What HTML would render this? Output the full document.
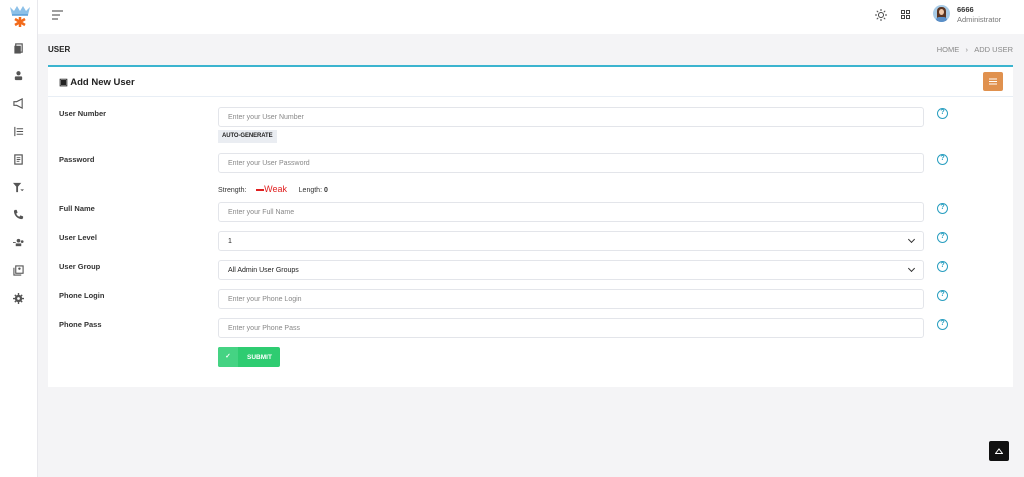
<!DOCTYPE html>
<html><head><meta charset="utf-8"><style>
*{box-sizing:border-box;margin:0;padding:0}
body{width:1024px;height:477px;background:#f4f4f6;font-family:"Liberation Sans",sans-serif;position:relative;overflow:hidden;color:#222}
.side{position:absolute;left:0;top:0;width:38px;height:477px;background:#fff;border-right:1px solid #e8e8ec}
.top{position:absolute;left:38px;top:0;right:0;height:34px;background:#fff}
.ic{position:absolute;left:13px;width:11px;height:11px}
.card{position:absolute;left:48px;top:65px;width:965px;height:322px;background:#fff;border-top:2px solid #3bb4cf}
.ch{height:30px;border-bottom:1px solid #e8eef5;position:relative}
.lbl{position:absolute;left:11px;font-size:7.5px;font-weight:bold;color:#333}
.inp{position:absolute;left:170px;width:706px;height:20px;border:1px solid #e3e5ea;border-radius:3px;font-size:7px;color:#888;padding:6px 9px}
.q{position:absolute;left:889px;width:11px;height:11px;border:1.5px solid #2a9fc0;border-radius:50%;font-size:7px;color:#2a9fc0;text-align:center;line-height:8px;font-weight:bold}
.chev{position:absolute;right:9px;top:5px;width:5px;height:5px;border-right:1.3px solid #333;border-bottom:1.3px solid #333;transform:rotate(45deg)}
</style></head><body>
<div class="side">
<svg style="position:absolute;left:8px;top:4px" width="24" height="24" viewBox="0 0 24 24"><path d="M2 3l4 4 3-5 3 5 3-5 3 5 4-4-2 8H4z" fill="#8cc0e8"/><path d="M4 11h16" stroke="#5a9fd8" stroke-width="1.5"/><path d="M12 13v10M7 15l10 6M17 15L7 21" stroke="#f26a1b" stroke-width="2.5"/></svg>
<svg class="ic" style="top:43px" viewBox="0 0 12 12"><rect x="3" y="1" width="7" height="9" fill="none" stroke="#555" stroke-width="1.3"/><rect x="1.5" y="3" width="7" height="8.5" fill="#555"/></svg>
<svg class="ic" style="top:70px" viewBox="0 0 12 12"><circle cx="6" cy="3.5" r="2.3" fill="#555"/><rect x="2" y="7" width="8" height="4" rx="1" fill="#555"/></svg>
<svg class="ic" style="top:98px" viewBox="0 0 12 12"><path d="M1 4h3l6-3v10l-6-3H1z" fill="none" stroke="#555" stroke-width="1.2"/></svg>
<svg class="ic" style="top:126px" viewBox="0 0 12 12"><path d="M2 1v10M4 3h7M4 6h7M4 9h7" stroke="#555" stroke-width="1.2"/></svg>
<svg class="ic" style="top:154px" viewBox="0 0 12 12"><rect x="2" y="1" width="8" height="10" fill="none" stroke="#555" stroke-width="1.3"/><path d="M4 4h4M4 6h4M4 8h3" stroke="#555"/></svg>
<svg class="ic" style="top:182px" viewBox="0 0 12 12"><path d="M0 1h9L5.5 5v6H3.5V5z" fill="#555"/><path d="M8 8h4l-2 2z" fill="#555"/></svg>
<svg class="ic" style="top:209px" viewBox="0 0 12 12"><path d="M2 1l2 0 1 3-1.5 1a6 6 0 0 0 3.5 3.5L8 7l3 1v2l-1 1C5 11 1 7 1 2z" fill="#555"/></svg>
<svg class="ic" style="top:237px" viewBox="0 0 12 12"><circle cx="6" cy="4" r="2" fill="#555"/><circle cx="10" cy="5" r="1.5" fill="#555"/><rect x="3" y="7" width="6" height="3" fill="#555"/><path d="M0 6h3" stroke="#555"/></svg>
<svg class="ic" style="top:265px" viewBox="0 0 12 12"><rect x="3" y="1" width="8" height="8" fill="none" stroke="#555" stroke-width="1.2"/><path d="M1 3v8h8" fill="none" stroke="#555" stroke-width="1.2"/><circle cx="7" cy="4" r="1.3" fill="#555"/></svg>
<svg class="ic" style="top:293px" viewBox="0 0 12 12"><path d="M6 0v12M0 6h12M2 2l8 8M10 2l-8 8" stroke="#555" stroke-width="1.5"/><circle cx="6" cy="6" r="4" fill="#555"/><circle cx="6" cy="6" r="1.5" fill="#fff"/></svg>
</div>
<div class="top">
<svg style="position:absolute;left:14px;top:10px" width="12" height="10" viewBox="0 0 12 10"><path d="M0 1h11M0 5h8M0 9h6" stroke="#666" stroke-width="1.2"/></svg>
<svg style="position:absolute;left:837px;top:9px" width="12" height="12" viewBox="0 0 12 12"><circle cx="6" cy="6" r="2.5" fill="none" stroke="#444"/><path d="M6 0v2M6 10v2M0 6h2M10 6h2M1.8 1.8l1.4 1.4M8.8 8.8l1.4 1.4M1.8 10.2l1.4-1.4M8.8 3.2l1.4-1.4" stroke="#444"/></svg>
<svg style="position:absolute;left:863px;top:10px" width="9" height="9" viewBox="0 0 9 9"><g fill="none" stroke="#444"><rect x=".5" y=".5" width="3" height="3"/><rect x="5.5" y=".5" width="3" height="3"/><rect x=".5" y="5.5" width="3" height="3"/><rect x="5.5" y="5.5" width="3" height="3"/></g></svg>
<div style="position:absolute;left:895px;top:5px;width:17px;height:17px;border-radius:50%;background:#a8cbe6;overflow:hidden"><div style="position:absolute;left:4px;top:2px;width:9px;height:14px;border-radius:4px 4px 0 0;background:#5a3422"></div><div style="position:absolute;left:6px;top:4px;width:5px;height:6px;border-radius:50%;background:#f0c8a8"></div><div style="position:absolute;left:3px;top:12px;width:11px;height:6px;background:#5a8fc8;border-radius:3px 3px 0 0"></div></div>
<div style="position:absolute;left:919px;top:5px;font-size:7.5px;font-weight:bold;color:#333">6666</div>
<div style="position:absolute;left:919px;top:15px;font-size:7.5px;color:#777">Administrator</div>
</div>
<div style="position:absolute;left:48px;top:45px;font-size:8px;font-weight:bold">USER</div>
<div style="position:absolute;right:11px;top:45px;font-size:7.5px;color:#888">HOME &nbsp;&nbsp;› &nbsp;&nbsp;ADD USER</div>
<div class="card">
<div class="ch"><div style="position:absolute;left:11px;top:10px;font-size:9.5px;font-weight:bold;color:#222">▣ Add New User</div>
<div style="position:absolute;right:10px;top:5px;width:20px;height:19px;background:#e0914e;border-radius:2px"><svg style="position:absolute;left:6px;top:6px" width="8" height="7"><path d="M0 1h8M0 3.5h8M0 6h8" stroke="#fff" stroke-width="1"/></svg></div></div>
<div class="lbl" style="top:42px">User Number</div><div class="inp" style="top:40px">Enter your User Number</div><div class="q" style="top:41px">?</div>
<div style="position:absolute;left:170px;top:63px;width:59px;height:13px;background:#eaedf2;font-size:6px;font-weight:bold;padding:3px 4px;color:#222;white-space:nowrap;letter-spacing:-0.1px">AUTO-GENERATE</div>
<div class="lbl" style="top:88px">Password</div><div class="inp" style="top:86px">Enter your User Password</div><div class="q" style="top:87px">?</div>
<div style="position:absolute;left:170px;top:117px;font-size:7px;color:#333">Strength: &nbsp;&nbsp;&nbsp;&nbsp;<span style="display:inline-block;width:8px;height:2px;background:#e02020;vertical-align:middle"></span><span style="color:#e02020;font-size:9px">Weak</span> &nbsp;&nbsp;&nbsp;&nbsp;&nbsp;Length: <b>0</b></div>
<div class="lbl" style="top:137px">Full Name</div><div class="inp" style="top:135px">Enter your Full Name</div><div class="q" style="top:136px">?</div>
<div class="lbl" style="top:166px">User Level</div><div class="inp" style="top:164px;color:#222">1<div class="chev"></div></div><div class="q" style="top:165px">?</div>
<div class="lbl" style="top:195px">User Group</div><div class="inp" style="top:193px;color:#222">All Admin User Groups<div class="chev"></div></div><div class="q" style="top:194px">?</div>
<div class="lbl" style="top:224px">Phone Login</div><div class="inp" style="top:222px">Enter your Phone Login</div><div class="q" style="top:223px">?</div>
<div class="lbl" style="top:253px">Phone Pass</div><div class="inp" style="top:251px">Enter your Phone Pass</div><div class="q" style="top:252px">?</div>
<div style="position:absolute;left:170px;top:280px;width:62px;height:20px;background:#2ecc71;border-radius:2px;color:#fff;font-size:6.5px;font-weight:bold"><div style="position:absolute;left:0;top:0;width:20px;height:20px;background:#45d383;border-radius:2px 0 0 2px;text-align:center;line-height:20px">✓</div><div style="position:absolute;left:29px;top:7px">SUBMIT</div></div>
</div>
<div style="position:absolute;left:989px;top:441px;width:20px;height:20px;background:#111;border-radius:2px"><svg style="position:absolute;left:6px;top:7px" width="8" height="6"><path d="M0.5 5.5L4 1l3.5 4.5z" fill="none" stroke="#fff"/></svg></div>
</body></html>
